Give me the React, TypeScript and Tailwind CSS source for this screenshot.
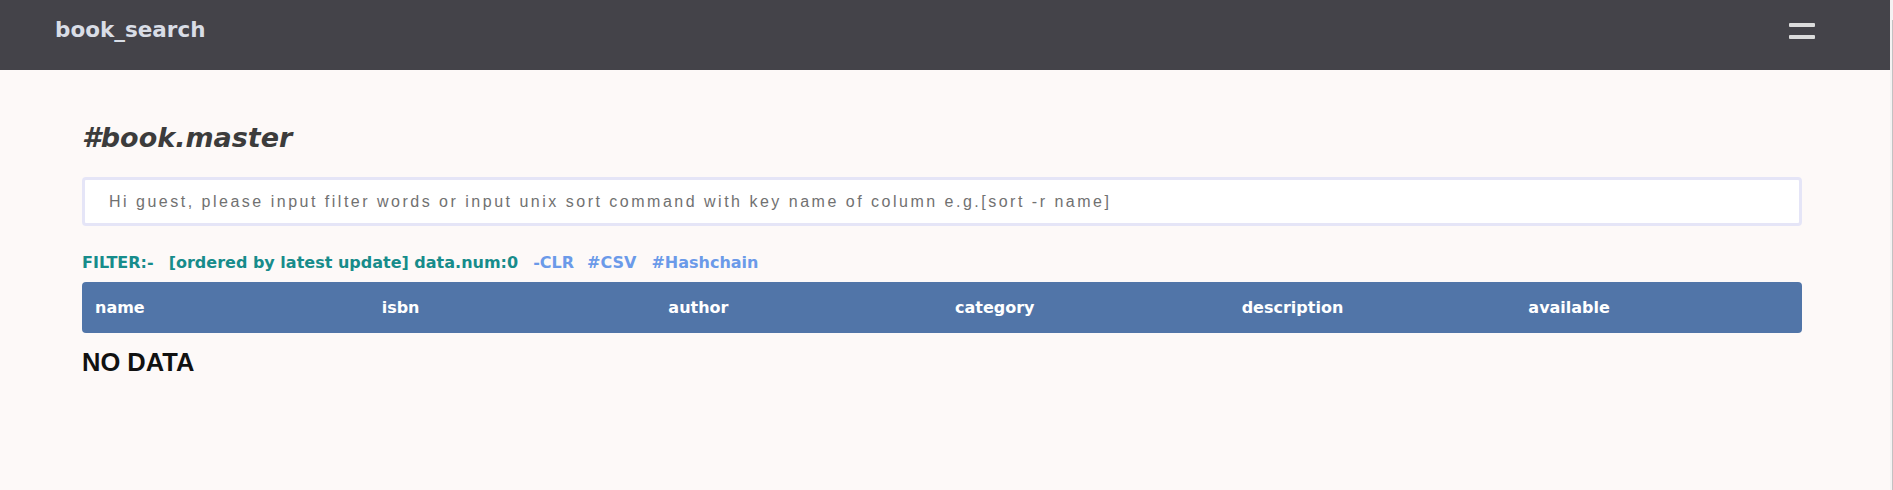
const columns = ["name", "isbn", "author", "category", "description", "available"]

export default function App() {
  return (
    <div className="flex min-h-[490px] bg-[#fdf9f8] font-['DejaVu_Sans',sans-serif]">
      <div className="flex-1">
        <header className="flex h-[70px] items-start justify-between bg-[#444349] pl-[55px] pr-[75px] pt-[18px]">
          <span className="text-[21.5px] font-bold leading-[24px] text-[#d9dde6]">book_search</span>
          <button className="mt-[5px] flex flex-col gap-[8px]" aria-label="menu">
            <span className="block h-[4px] w-[26px] rounded-[1px] bg-[#dcdcdc]" />
            <span className="block h-[4px] w-[26px] rounded-[1px] bg-[#dcdcdc]" />
          </button>
        </header>

        <main className="pl-[82px] pr-[88px]">
          <h1 className="mt-[52px] text-[27px] font-bold italic leading-[32px] text-[#3c3c3c]">#book.master</h1>

          <input
            className="mt-[23px] box-border block h-[49px] w-full rounded-[4px] border-[3px] border-[#e5e5f7] bg-white pl-[24px] font-['Liberation_Sans',Arial,sans-serif] text-[16px] tracking-[2.5px] text-[#555] outline-none placeholder:text-[#717171]"
            placeholder="Hi guest, please input filter words or input unix sort command with key name of column e.g.[sort -r name]"
          />

          <div className="mt-[27px] flex h-[20px] items-center text-[16px] font-bold leading-[20px]">
            <span className="text-[#178c8b]">FILTER:-</span>
            <span className="ml-[15px] text-[#178c8b]">[ordered by latest update] data.num:0</span>
            <a className="ml-[15px] text-[#6b9ae9]">-CLR</a>
            <a className="ml-[13px] text-[#6b9ae9]">#CSV</a>
            <a className="ml-[15px] text-[#6b9ae9]">#Hashchain</a>
          </div>

          <div className="mt-[9px] grid h-[51px] grid-cols-6 items-center rounded-[4px] bg-[#5175a8]">
            {columns.map((c) => (
              <div key={c} className="pl-[13px] text-[16px] font-bold text-white">
                {c}
              </div>
            ))}
          </div>

          <h3 className="mt-[15px] font-['Liberation_Sans',Arial,sans-serif] text-[25.5px] font-bold leading-[28px] text-[#111]">
            NO DATA
          </h3>
        </main>
      </div>

      <div className="flex w-[3px] bg-[#f4f2f2]">
        <div className="ml-[1.5px] mt-[20px] w-[1.5px] bg-[#c2c2c2]" />
      </div>
    </div>
  )
}
